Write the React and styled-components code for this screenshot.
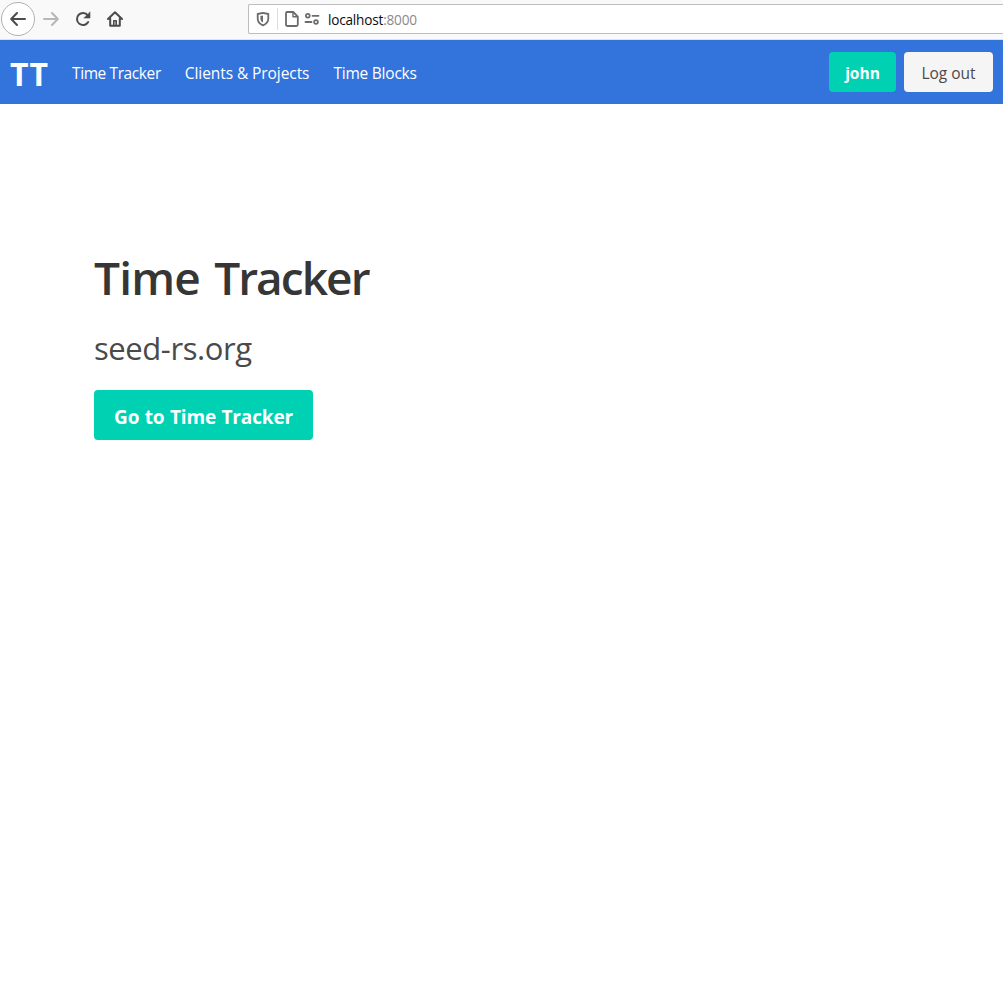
import React from "react";
import styled, { createGlobalStyle } from "styled-components";

const GlobalStyle = createGlobalStyle`
  *, *::before, *::after { box-sizing: border-box; }
  body {
    margin: 0;
    background: #fff;
    color: #4a4a4a;
    font-family: "Open Sans", "Noto Sans", sans-serif;
    font-size: 16px;
    overflow: hidden;
  }
`;

const Page = styled.div`
  min-height: 100vh;
`;

const Toolbar = styled.header`
  display: flex;
  align-items: flex-start;
  height: 40px;
  background: #f9f9fa;
  border-bottom: 1px solid #e0e2e6;
`;

const ToolButtons = styled.div`
  display: flex;
  align-items: center;
  width: 248px;
  height: 38px;
  padding-left: 1px;
`;

const ToolButton = styled.button`
  display: grid;
  place-items: center;
  width: ${(p) => (p.$round ? 34 : 32)}px;
  height: 34px;
  padding: 0;
  border: ${(p) => (p.$round ? "1px solid #b1b1b3" : "0")};
  border-radius: ${(p) => (p.$round ? "50%" : "2px")};
  background: ${(p) => (p.$round ? "#fff" : "transparent")};
  color: ${(p) => (p.$muted ? "#b7b7b8" : "#4c4c4f")};
`;

const AddressBar = styled.div`
  display: flex;
  align-items: center;
  flex: 1;
  height: 30px;
  margin-top: 4px;
  padding-left: 6px;
  border: 1px solid #bdbdbf;
  border-right: 0;
  border-radius: 2px 0 0 2px;
  background: #fff;
  color: #6b6b6d;
`;

const Divider = styled.span`
  width: 1px;
  height: 22px;
  margin: 0 6px;
  background: #dedee0;
`;

const IconGap = styled.span`
  width: ${(p) => p.$w}px;
`;

const Url = styled.span`
  margin-left: 8px;
  padding-top: 2px;
  color: #8a8a8c;
  font-size: 13.6px;
  line-height: 20px;
  letter-spacing: -0.2px;
  white-space: nowrap;
`;

const Host = styled.span`
  color: #0c0c0d;
`;

const Navbar = styled.nav`
  display: flex;
  align-items: center;
  height: 64px;
  padding: 0 10px;
  background: #3273dc;
  color: #fff;
`;

const Brand = styled.a`
  width: 50px;
  padding-top: 3px;
  font-size: 32px;
  font-weight: 700;
  line-height: 44px;
  letter-spacing: 1px;
`;

const NavItem = styled.a`
  padding: 1px 12px 0;
  font-size: 15.5px;
  line-height: 24px;
  letter-spacing: ${(p) => p.$tracking || 0}px;
  white-space: nowrap;
`;

const NavButtons = styled.div`
  display: flex;
  gap: 8px;
  margin-left: auto;
`;

const Button = styled.button`
  display: flex;
  align-items: center;
  justify-content: center;
  width: ${(p) => p.$width}px;
  height: ${(p) => (p.$large ? 50 : 40)}px;
  padding: ${(p) => (p.$large ? 4 : 1)}px 0 0;
  border: 0;
  border-radius: 4px;
  background: ${(p) => (p.$primary ? "#00d1b2" : "#f5f5f5")};
  color: ${(p) => (p.$primary ? "#fff" : "#4a4a4a")};
  font-family: inherit;
  font-size: ${(p) => (p.$large ? 19 : 15.5)}px;
  font-weight: ${(p) => (p.$primary ? 700 : 400)};
  letter-spacing: ${(p) => (p.$large ? -0.15 : 0)}px;
  word-spacing: ${(p) => (p.$large ? 0.7 : 0)}px;
  white-space: nowrap;
`;

const Hero = styled.main`
  display: flex;
  flex-direction: column;
  align-items: flex-start;
  padding: 146px 94px 0;
`;

const Title = styled.h1`
  margin: 0;
  color: #363636;
  font-size: 46px;
  font-weight: 600;
  line-height: 54px;
  letter-spacing: -0.8px;
  word-spacing: 3px;
`;

const TightWord = styled.span`
  letter-spacing: -1.95px;
`;

const Subtitle = styled.h2`
  margin: 24px 0 21px;
  color: #4a4a4a;
  font-size: 31px;
  font-weight: 400;
  line-height: 41px;
  letter-spacing: -0.42px;
`;

const Icon = ({ size = 16, children }) => (
  <svg
    width={size}
    height={size}
    viewBox="0 0 16 16"
    fill="none"
    stroke="currentColor"
    strokeWidth="2"
    strokeLinecap="round"
    strokeLinejoin="round"
  >
    {children}
  </svg>
);

const BackIcon = () => (
  <Icon><path d="M15 8H1.5M7 2L1.2 8L7 14" /></Icon>
);

const ForwardIcon = () => (
  <Icon><path d="M1 8H14.5M9 2L14.8 8L9 14" /></Icon>
);

const ReloadIcon = () => (
  <Icon>
    <path d="M13.2 11A6 6 0 1 1 12.7 4.3" />
    <path d="M15 1.2V7H9.2Z" fill="currentColor" strokeWidth="0.6" />
  </Icon>
);

const HomeIcon = () => (
  <Icon>
    <path d="M1 8L8 1.2L15 8M3.2 7.5V14.8H12.8V7.5" />
    <path d="M6.8 14.5V9.8H9.2V14.5" strokeWidth="1.6" />
  </Icon>
);

const ShieldIcon = () => (
  <Icon>
    <path d="M8 1.9L13.3 3V7.5C13.3 10.6 11.4 13 8 14.4C4.6 13 2.7 10.6 2.7 7.5V3Z" strokeWidth="1.8" />
    <path d="M8 4.6V11.6C6.3 10.6 5.4 9.2 5.4 7.4V5.1Z" fill="currentColor" stroke="none" />
  </Icon>
);

const PageIcon = () => (
  <Icon>
    <path d="M3.2 1H9.2L13.8 5.6V13.5Q13.8 15 12.3 15H3.7Q2 15 2 13.5V2.5Q2 1 3.2 1Z" strokeWidth="1.8" />
    <path d="M9 1.2V5.8H13.5" strokeWidth="1.4" />
  </Icon>
);

const PermissionsIcon = () => (
  <Icon>
    <circle cx="3.8" cy="4.8" r="1.9" strokeWidth="1.7" />
    <path d="M8.5 4.8H14.5M1.5 11H7.5" strokeWidth="1.8" />
    <circle cx="12" cy="11" r="1.9" strokeWidth="1.7" />
  </Icon>
);

export default function App() {
  return (
    <Page>
      <GlobalStyle />
      <Toolbar>
        <ToolButtons>
          <ToolButton $round aria-label="Back"><BackIcon /></ToolButton>
          <ToolButton $muted aria-label="Forward"><ForwardIcon /></ToolButton>
          <ToolButton aria-label="Reload"><ReloadIcon /></ToolButton>
          <ToolButton aria-label="Home"><HomeIcon /></ToolButton>
        </ToolButtons>
        <AddressBar>
          <ShieldIcon />
          <Divider />
          <PageIcon />
          <IconGap $w={4} />
          <PermissionsIcon />
          <Url><Host>localhost</Host>:8000</Url>
        </AddressBar>
      </Toolbar>
      <Navbar>
        <Brand>TT</Brand>
        <NavItem $tracking={-0.4}>Time Tracker</NavItem>
        <NavItem $tracking={-0.08}>Clients &amp; Projects</NavItem>
        <NavItem $tracking={-0.22}>Time Blocks</NavItem>
        <NavButtons>
          <Button $primary $width={67}>john</Button>
          <Button $width={89}>Log out</Button>
        </NavButtons>
      </Navbar>
      <Hero>
        <Title>Time <TightWord>Tracker</TightWord></Title>
        <Subtitle>seed-rs.org</Subtitle>
        <Button $primary $large $width={219}>Go to Time Tracker</Button>
      </Hero>
    </Page>
  );
}
